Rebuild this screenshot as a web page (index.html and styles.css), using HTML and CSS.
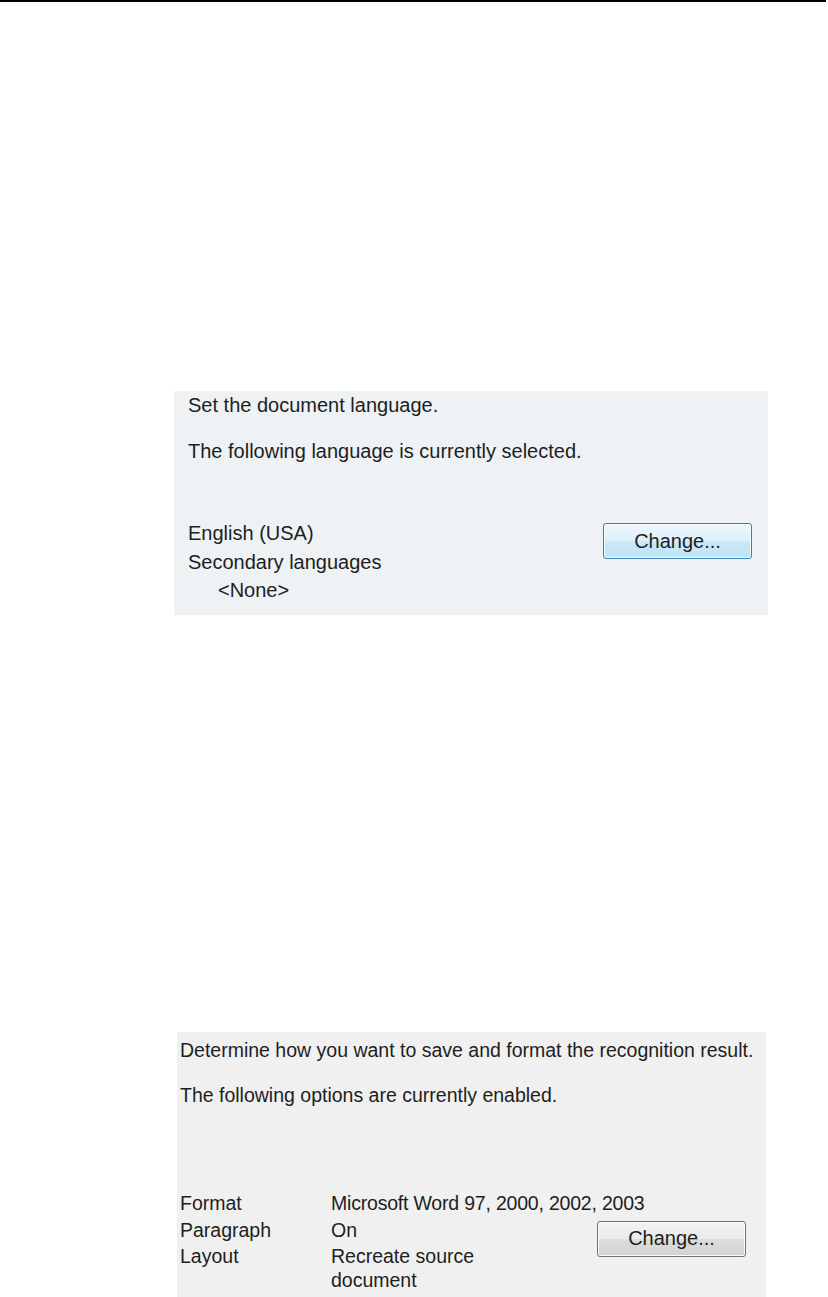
FILE: index.html
```html
<!DOCTYPE html>
<html lang="en">
<head>
    <meta charset="UTF-8">
    <meta name="viewport" content="width=device-width, initial-scale=1.0">
    <title>Document language and save options</title>
    <link rel="stylesheet" href="styles.css">
</head>
<body>

    <!-- Top rule -->
    <div class="top-rule"></div>

    <!-- Language panel -->
    <div class="panel panel-language">
        <p class="intro">Set the document language.</p>
        <p class="intro second">The following language is currently selected.</p>
        <div class="panel-bottom">
            <div class="values">
                <div class="line">English (USA)</div>
                <div class="line">Secondary languages</div>
                <div class="line indent">&lt;None&gt;</div>
            </div>
            <button class="change-btn blue">Change...</button>
        </div>
    </div>

    <!-- Save panel -->
    <div class="panel panel-save">
        <p class="intro">Determine how you want to save and format the recognition result.</p>
        <p class="intro second">The following options are currently enabled.</p>
        <div class="options">
            <div class="label">Format</div>
            <div class="value wide">Microsoft Word 97, 2000, 2002, 2003</div>
            <div class="label">Paragraph</div>
            <div class="value">On</div>
            <button class="change-btn grey">Change...</button>
            <div class="label">Layout</div>
            <div class="value narrow">Recreate source document</div>
        </div>
    </div>

</body>
</html>
```

FILE: styles.css
```css
/* General Styling */
* {
    margin: 0;
    padding: 0;
    box-sizing: border-box;
}

body {
    background-color: #ffffff;
    font-family: "Liberation Sans", Arial, sans-serif;
    font-size: 20px;
    color: #1e1e1e;
}

.top-rule {
    height: 2px;
    background-color: #000000;
    margin-right: 2px;
}

/* Panels */
.panel p {
    line-height: 20px;
    white-space: nowrap;
}

.panel-language {
    width: 594px;
    height: 224px;
    margin-top: 389px;
    margin-left: 174px;
    padding: 4px 16px 0 14px;
    background-color: #eef2f5;
}

.panel-save {
    width: 589px;
    height: 265px;
    margin-top: 417px;
    margin-left: 177px;
    padding: 8px 0 0 3px;
    background-color: #f0f0f0;
    font-size: 19.5px;
    overflow: hidden;
}

.panel-language .intro.second {
    margin-top: 26px;
}

.panel-save .intro.second {
    margin-top: 25px;
}

.panel-bottom {
    display: flex;
    align-items: flex-start;
    justify-content: space-between;
    margin-top: 62px;
}

/* Language values */
.values .line {
    height: 28.5px;
    line-height: 20px;
}

.values .indent {
    padding-left: 30px;
}

/* Save options */
.options {
    display: grid;
    grid-template-columns: 151px 266px 149px;
    row-gap: 6.5px;
    margin-top: 88px;
    line-height: 20px;
}

.options .wide {
    grid-column: 2 / 4;
    letter-spacing: -0.2px;
}

.options .narrow {
    max-width: 170px;
    line-height: 24px;
    margin-top: -2px;
}

.options .change-btn {
    grid-column: 3;
    grid-row: 2 / 4;
    margin-top: 1px;
}

/* Buttons */
.change-btn {
    width: 149px;
    height: 36px;
    font-family: "Liberation Sans", Arial, sans-serif;
    font-size: 20px;
    color: #1e1e1e;
    border-radius: 3px;
    cursor: pointer;
}

.change-btn.blue {
    border: 1px solid #3c7fb1;
    background: linear-gradient(#ecf7fd 0%, #ddf1fb 50%, #cbe9f9 51%, #bde2f6 100%);
    box-shadow: inset 0 0 0 1px #f4fbfe;
}

.change-btn.grey {
    border: 1px solid #707070;
    background: linear-gradient(#f2f2f2 0%, #ebebeb 50%, #dddddd 51%, #d2d2d2 100%);
    box-shadow: inset 0 0 0 1px #fcfcfc;
}
```
